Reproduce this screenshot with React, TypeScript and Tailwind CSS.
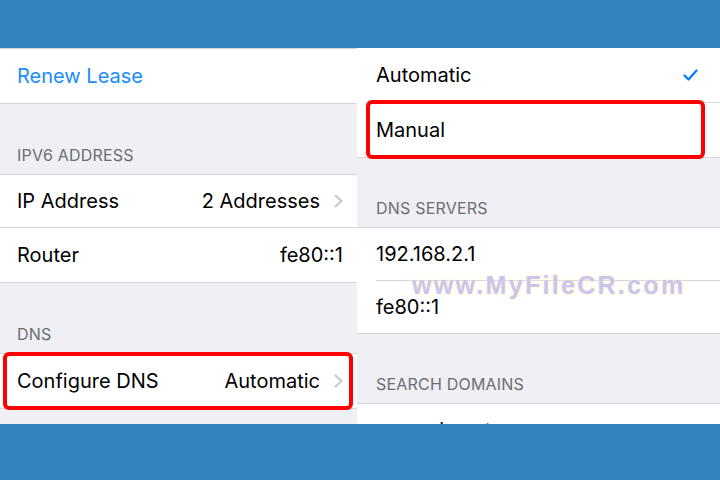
import React from 'react';

const font = { fontFamily: 'Inter, "Liberation Sans", sans-serif' };

const Chevron = () => (
  <svg width="9" height="14" viewBox="0 0 9 14" className="ml-[14px] shrink-0">
    <path d="M1.5 1.5l6 5.5-6 5.5" fill="none" stroke="#c7c7cc" strokeWidth="2" strokeLinecap="round" strokeLinejoin="round" />
  </svg>
);

const Check = () => (
  <svg width="15" height="12" viewBox="0 0 15 12">
    <path d="M1.5 6.5l4 4 8-9" fill="none" stroke="#007aff" strokeWidth="2.2" strokeLinecap="round" strokeLinejoin="round" />
  </svg>
);

const Header: React.FC<{ title: string; h: string }> = ({ title, h }) => (
  <div className={`${h} shrink-0 flex items-end pb-[7px] text-[16px] text-[#6d6d72] tracking-[0.2px]`}>{title}</div>
);

const Left = () => (
  <div className="w-[357px] shrink-0 bg-[#efeff4] flex flex-col">
    <div className="shrink-0 bg-white border-y border-[#d6d6da] h-[56px] flex items-center pl-[17px] text-[20px] text-[#1a8cff]">
      Renew Lease
    </div>
    <Header title="IPV6 ADDRESS" h="h-[70px] pl-[17px]" />
    <div className="shrink-0 bg-white border-y border-[#d6d6da]">
      <div className="h-[53px] flex items-center pl-[17px] pr-[14px] text-[20px] text-black border-b border-[#d6d6da]">
        <span className="flex-1">IP Address</span>
        <span>2 Addresses</span>
        <Chevron />
      </div>
      <div className="h-[54px] flex items-center pl-[17px] pr-[14px] text-[20px] text-black">
        <span className="flex-1">Router</span>
        <span>fe80::1</span>
      </div>
    </div>
    <Header title="DNS" h="h-[70px] pl-[17px]" />
    <div className="shrink-0 relative bg-white border-y border-[#d6d6da] h-[56px] flex items-center pl-[17px] pr-[14px] text-[20px] text-black">
      <span className="flex-1">Configure DNS</span>
      <span>Automatic</span>
      <Chevron />
      <div className="absolute top-[-2px] bottom-[-2px] left-[3px] right-[4px] border-[4px] border-[#ff0000] rounded-[6px]" />
    </div>
  </div>
);

const Right = () => (
  <div className="relative flex-1 bg-[#efeff4] flex flex-col">
    <div className="shrink-0 bg-white border-b border-[#d6d6da]">
      <div className="h-[54px] flex items-center pl-[19px] pr-[22px] text-[20px] text-black">
        <span className="flex-1">Automatic</span>
        <Check />
      </div>
      <div className="ml-[19px] h-px bg-[#d6d6da]" />
      <div className="relative h-[54px] flex items-center pl-[19px] text-[20px] text-black">
        Manual
        <div className="absolute top-[-3px] bottom-[-2px] left-[9px] right-[15px] border-[4px] border-[#ff0000] rounded-[6px]" />
      </div>
    </div>
    <Header title="DNS SERVERS" h="h-[69px] pl-[19px]" />
    <div className="shrink-0 bg-white border-y border-[#d6d6da]">
      <div className="h-[52px] flex items-center pl-[19px] text-[20px] text-black">192.168.2.1</div>
      <div className="ml-[19px] h-px bg-[#d6d6da]" />
      <div className="h-[52px] flex items-center pl-[19px] text-[20px] text-black">fe80::1</div>
    </div>
    <Header title="SEARCH DOMAINS" h="h-[69px] pl-[19px]" />
    <div className="shrink-0 bg-white border-t border-[#d6d6da] h-[52px] flex items-center pl-[19px] text-[20px] text-black">
      example.net
    </div>
    <div
      className="absolute left-[55px] top-[219px] text-[25px] font-extrabold tracking-[2.3px] text-[#cbc4f0]"
      style={{ fontFamily: '"Liberation Sans", Arial, sans-serif', textShadow: '0 0 3px #fff3c4, 0 0 2px #fff3c4' }}
    >
      www.MyFileCR.com
    </div>
  </div>
);

export default function App() {
  return (
    <div className="w-[720px] h-[480px] overflow-hidden flex flex-col bg-[#3485bf]" style={font}>
      <div className="h-[48px] shrink-0 bg-[#3485bf]" />
      <div className="h-[376px] shrink-0 flex overflow-hidden">
        <Left />
        <Right />
      </div>
      <div className="flex-1 bg-[#3485bf]" />
    </div>
  );
}
